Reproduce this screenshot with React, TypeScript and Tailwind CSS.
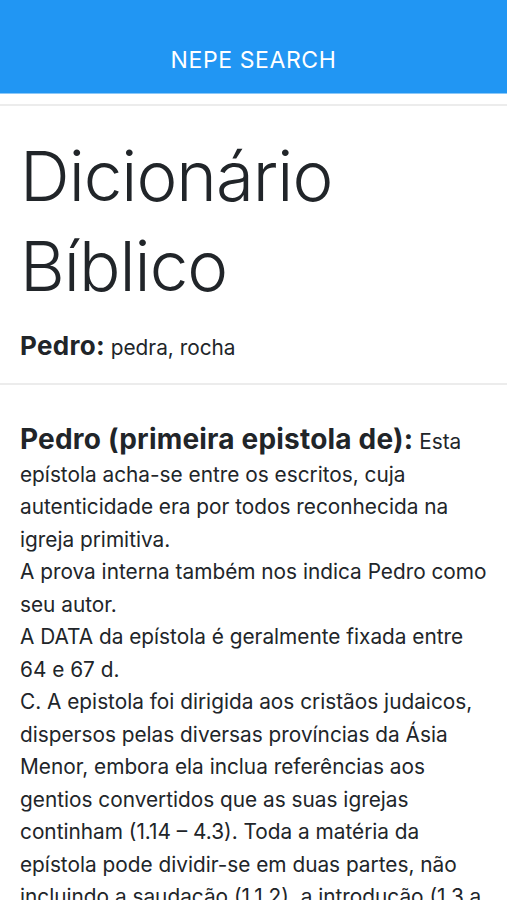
import React from "react";

export default function App() {
  return (
    <div className="min-h-[900px] bg-white text-[#212529]" style={{ fontFamily: "Inter, 'Liberation Sans', sans-serif" }}>
      <header className="h-[93px] bg-[#2196f3] flex items-end justify-center pb-[20px] shadow-[0_1px_0_#8cc8f8]">
        <span className="text-white text-[23px] leading-[26px] tracking-[0.6px]">NEPE SEARCH</span>
      </header>
      <div className="h-[11px]" />
      <section className="border-t-2 border-b-2 border-[#ececec] px-5 pt-[25px] pb-[19px]">
        <h1 className="text-[69px] leading-[90px] font-light tracking-[-1px]">Dicionário Bíblico</h1>
        <p className="mt-[19px] text-[20.8px] leading-[32px]">
          <strong className="text-[26px] font-bold tracking-[0.3px]">Pedro:</strong> pedra, rocha
        </p>
      </section>
      <main className="px-5 pt-[38px]">
        <p className="text-[20.8px] leading-[32.5px]">
          <strong className="text-[28px] font-bold tracking-[0.2px]">Pedro (primeira epistola de):</strong> Esta epístola acha-se entre os escritos, cuja autenticidade era por todos reconhecida na igreja primitiva.
          <br />
          A prova interna também nos indica Pedro como seu autor.
          <br />
          A DATA da epístola é geralmente fixada entre 64 e 67 d.
          <br />
          C. A epistola foi dirigida aos cristãos judaicos, dispersos pelas diversas províncias da Ásia Menor, embora ela inclua referências aos gentios convertidos que as suas igrejas continham (1.14 – 4.3). Toda a matéria da epístola pode dividir-se em duas partes, não incluindo a saudação (1.1,2), a introdução (1.3 a 12) e a conclusão (5.12 a 14).
        </p>
      </main>
    </div>
  );
}
